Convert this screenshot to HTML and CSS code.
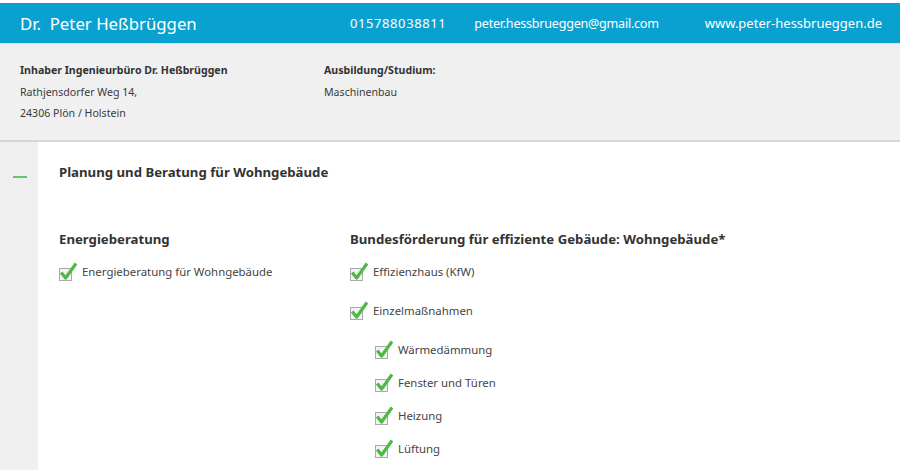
FILE: index.html
```html
<!DOCTYPE html>
<html lang="de">
<head>
<meta charset="utf-8">
<title>Dr. Peter Heßbrüggen</title>
<link rel="stylesheet" href="styles.css">
</head>
<body>
<div class="page">
  <header class="topbar">
    <div class="name">Dr.&nbsp; Peter Heßbrüggen</div>
    <div class="contact phone">015788038811</div>
    <div class="contact email">peter.hessbrueggen@gmail.com</div>
    <div class="contact web">www.peter-hessbrueggen.de</div>
  </header>
  <section class="info">
    <div class="info-col first">
      <div class="strong">Inhaber Ingenieurbüro Dr. Heßbrüggen</div>
      <div>Rathjensdorfer Weg 14,</div>
      <div>24306 Plön / Holstein</div>
    </div>
    <div class="info-col">
      <div class="strong">Ausbildung/Studium:</div>
      <div>Maschinenbau</div>
    </div>
  </section>
  <main class="main">
    <aside class="side"><span class="dash"></span></aside>
    <div class="content">
      <h2 class="section-title">Planung und Beratung für Wohngebäude</h2>
      <div class="columns">
        <div class="col left">
          <h3 class="col-title">Energieberatung</h3>
          <ul class="checks">
            <li><svg class="cb" viewBox="0 0 20 21"><rect x="1.5" y="7.5" width="12" height="12" fill="#f4f4f4" stroke="#a9a9a9"/><path d="M3.2 11.5 L7.6 17 L18 2.5" fill="none" stroke="#4fb848" stroke-width="3.2" stroke-linejoin="round"/></svg>Energieberatung für Wohngebäude</li>
          </ul>
        </div>
        <div class="col right">
          <h3 class="col-title">Bundesförderung für effiziente Gebäude: Wohngebäude*</h3>
          <ul class="checks">
            <li><svg class="cb" viewBox="0 0 20 21"><rect x="1.5" y="7.5" width="12" height="12" fill="#f4f4f4" stroke="#a9a9a9"/><path d="M3.2 11.5 L7.6 17 L18 2.5" fill="none" stroke="#4fb848" stroke-width="3.2" stroke-linejoin="round"/></svg>Effizienzhaus (KfW)</li>
            <li><svg class="cb" viewBox="0 0 20 21"><rect x="1.5" y="7.5" width="12" height="12" fill="#f4f4f4" stroke="#a9a9a9"/><path d="M3.2 11.5 L7.6 17 L18 2.5" fill="none" stroke="#4fb848" stroke-width="3.2" stroke-linejoin="round"/></svg>Einzelmaßnahmen</li>
          </ul>
          <ul class="checks sub">
            <li><svg class="cb" viewBox="0 0 20 21"><rect x="1.5" y="7.5" width="12" height="12" fill="#f4f4f4" stroke="#a9a9a9"/><path d="M3.2 11.5 L7.6 17 L18 2.5" fill="none" stroke="#4fb848" stroke-width="3.2" stroke-linejoin="round"/></svg>Wärmedämmung</li>
            <li><svg class="cb" viewBox="0 0 20 21"><rect x="1.5" y="7.5" width="12" height="12" fill="#f4f4f4" stroke="#a9a9a9"/><path d="M3.2 11.5 L7.6 17 L18 2.5" fill="none" stroke="#4fb848" stroke-width="3.2" stroke-linejoin="round"/></svg>Fenster und Türen</li>
            <li><svg class="cb" viewBox="0 0 20 21"><rect x="1.5" y="7.5" width="12" height="12" fill="#f4f4f4" stroke="#a9a9a9"/><path d="M3.2 11.5 L7.6 17 L18 2.5" fill="none" stroke="#4fb848" stroke-width="3.2" stroke-linejoin="round"/></svg>Heizung</li>
            <li><svg class="cb" viewBox="0 0 20 21"><rect x="1.5" y="7.5" width="12" height="12" fill="#f4f4f4" stroke="#a9a9a9"/><path d="M3.2 11.5 L7.6 17 L18 2.5" fill="none" stroke="#4fb848" stroke-width="3.2" stroke-linejoin="round"/></svg>Lüftung</li>
          </ul>
        </div>
      </div>
    </div>
  </main>
</div>
</body>
</html>
```
FILE: styles.css
```css
* { box-sizing: border-box; }
html, body { margin: 0; padding: 0; background: #fff; }
body {
  font-family: "Noto Sans", "Open Sans", "DejaVu Sans", sans-serif;
  color: #333;
  overflow: hidden;
}
.page { width: 900px; padding-top: 3px; }

.topbar {
  display: flex;
  align-items: center;
  background: #0aa1d1;
  color: #fff;
  padding: 0 18px 0 20px;
  border-bottom: 1px solid #cfe7f0;
  height: 41px;
}
.name { flex: 1; font-size: 16.8px; }
.contact { font-size: 13px; }
.phone { letter-spacing: 0.6px; margin-right: 28px; }
.email { font-size: 12.6px; letter-spacing: -0.25px; margin-right: 46px; }

.info {
  display: flex;
  background: #f0f0f0;
  border-bottom: 2px solid #d6d6d6;
  padding: 16px 20px 0;
  height: 98px;
  font-size: 10.6px;
  line-height: 21.5px;
  color: #3a3a3a;
}
.info-col.first { width: 304px; }
.strong { font-weight: 700; color: #333; }

.main { display: flex; min-height: 330px; }
.side { width: 38px; background: #efefef; position: relative; }
.dash {
  position: absolute;
  left: 13px; top: 34px;
  width: 14px; height: 2px;
  background: #6cc36c;
}
.content { flex: 1; padding: 20px 0 0 21px; }
.section-title {
  margin: 0;
  font-size: 13.2px;
  font-weight: 700;
  line-height: 20px;
  color: #333;
}
.columns { display: flex; margin-top: 47px; }
.col.left { width: 291px; }
.col-title {
  margin: 0 0 12px;
  font-size: 13.2px;
  font-weight: 700;
  line-height: 20px;
  color: #333;
}
.checks { list-style: none; margin: 0; padding: 0; }
.checks li {
  display: flex;
  align-items: center;
  height: 21px;
  margin-bottom: 18px;
  font-size: 11.4px;
  color: #444;
}
.checks.sub { padding-left: 25px; margin-top: 0; }
.checks.sub li { margin-bottom: 12px; }
.cb { width: 20px; height: 21px; margin: 0 4px 0 -1px; flex: none; }
```
